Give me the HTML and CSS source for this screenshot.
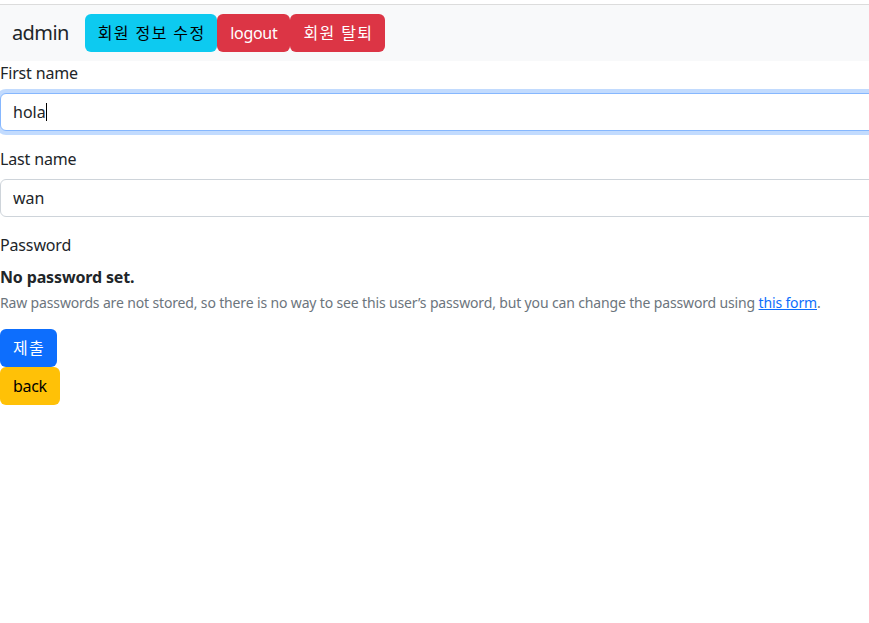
FILE: index.html
```html
<!DOCTYPE html>
<html lang="ko">
<head>
<meta charset="utf-8">
<title>회원 정보 수정</title>
<link rel="stylesheet" href="styles.css">
</head>
<body>
<div class="page">
  <nav class="navbar">
    <span class="brand">admin</span>
    <a class="btn btn-info ko" href="#">회원 정보 수정</a>
    <a class="btn btn-danger" href="#">logout</a>
    <a class="btn btn-danger ko" href="#">회원 탈퇴</a>
  </nav>
  <form class="form">
    <div class="field">
      <label class="label" for="first">First name</label>
      <div class="input-wrap">
        <input class="input focused" id="first" type="text" value="hola">
        <span class="caret"></span>
      </div>
    </div>
    <div class="field">
      <label class="label" for="last">Last name</label>
      <input class="input" id="last" type="text" value="wan">
    </div>
    <div class="field">
      <label class="label">Password</label>
      <div class="pw-status"><strong>No password set.</strong></div>
      <div class="help">Raw passwords are not stored, so there is no way to see this user’s password, but you can change the password using <a href="#">this form</a>.</div>
    </div>
    <div class="actions">
      <button class="btn btn-primary ko" type="button">제출</button>
      <a class="btn btn-warning" href="#">back</a>
    </div>
  </form>
</div>
</body>
</html>
```

FILE: styles.css
```css
html, body {
  margin: 0;
  padding: 0;
  overflow: hidden;
  background: #fff;
}
body {
  font-family: "Noto Sans", "Noto Sans CJK KR", sans-serif;
  font-size: 16px;
  line-height: 1.5;
  color: #212529;
  letter-spacing: -0.15px;
}
.page {
  width: 1000px;
  padding-top: 4px;
}
.navbar {
  display: flex;
  align-items: center;
  background: #f8f9fa;
  border-top: 1px solid #dcdcdc;
  padding: 9px 12px;
  height: 38px;
}
.brand {
  font-size: 20px;
  line-height: 30px;
  margin-right: 16px;
  letter-spacing: -0.6px;
}
.btn {
  display: inline-flex;
  align-items: center;
  box-sizing: border-box;
  height: 38px;
  padding: 0 12px;
  border: 1px solid transparent;
  border-radius: 6px;
  font-family: inherit;
  font-size: 16px;
  line-height: 24px;
  text-decoration: none;
  cursor: pointer;
  letter-spacing: -0.3px;
}
.btn.ko {
  letter-spacing: 1.4px;
  padding-right: 10.6px;
}
.btn-info { background: #0dcaf0; color: #000; }
.btn-danger { background: #dc3545; color: #fff; }
.btn-primary { background: #0d6efd; color: #fff; }
.btn-warning { background: #ffc107; color: #000; }
.form {
  display: flex;
  flex-direction: column;
}
.field {
  display: flex;
  flex-direction: column;
  margin-bottom: 16px;
}
.label {
  margin-bottom: 8px;
}
.input-wrap {
  position: relative;
}
.input {
  display: block;
  box-sizing: border-box;
  width: 100%;
  height: 38px;
  padding: 6px 12px;
  font-family: inherit;
  font-size: 16px;
  color: #212529;
  border: 1px solid #ced4da;
  border-radius: 6px;
  outline: none;
}
.input.focused {
  border-color: #86b7fe;
  box-shadow: 0 0 0 4px rgba(13, 110, 253, 0.25);
}
.caret {
  position: absolute;
  left: 46px;
  top: 10px;
  width: 1px;
  height: 18px;
  background: #000;
}
.help {
  margin-top: 3px;
  font-size: 14px;
  color: #6c757d;
}
.help a {
  color: #0d6efd;
}
.actions {
  display: flex;
  flex-direction: column;
  align-items: flex-start;
}
```
